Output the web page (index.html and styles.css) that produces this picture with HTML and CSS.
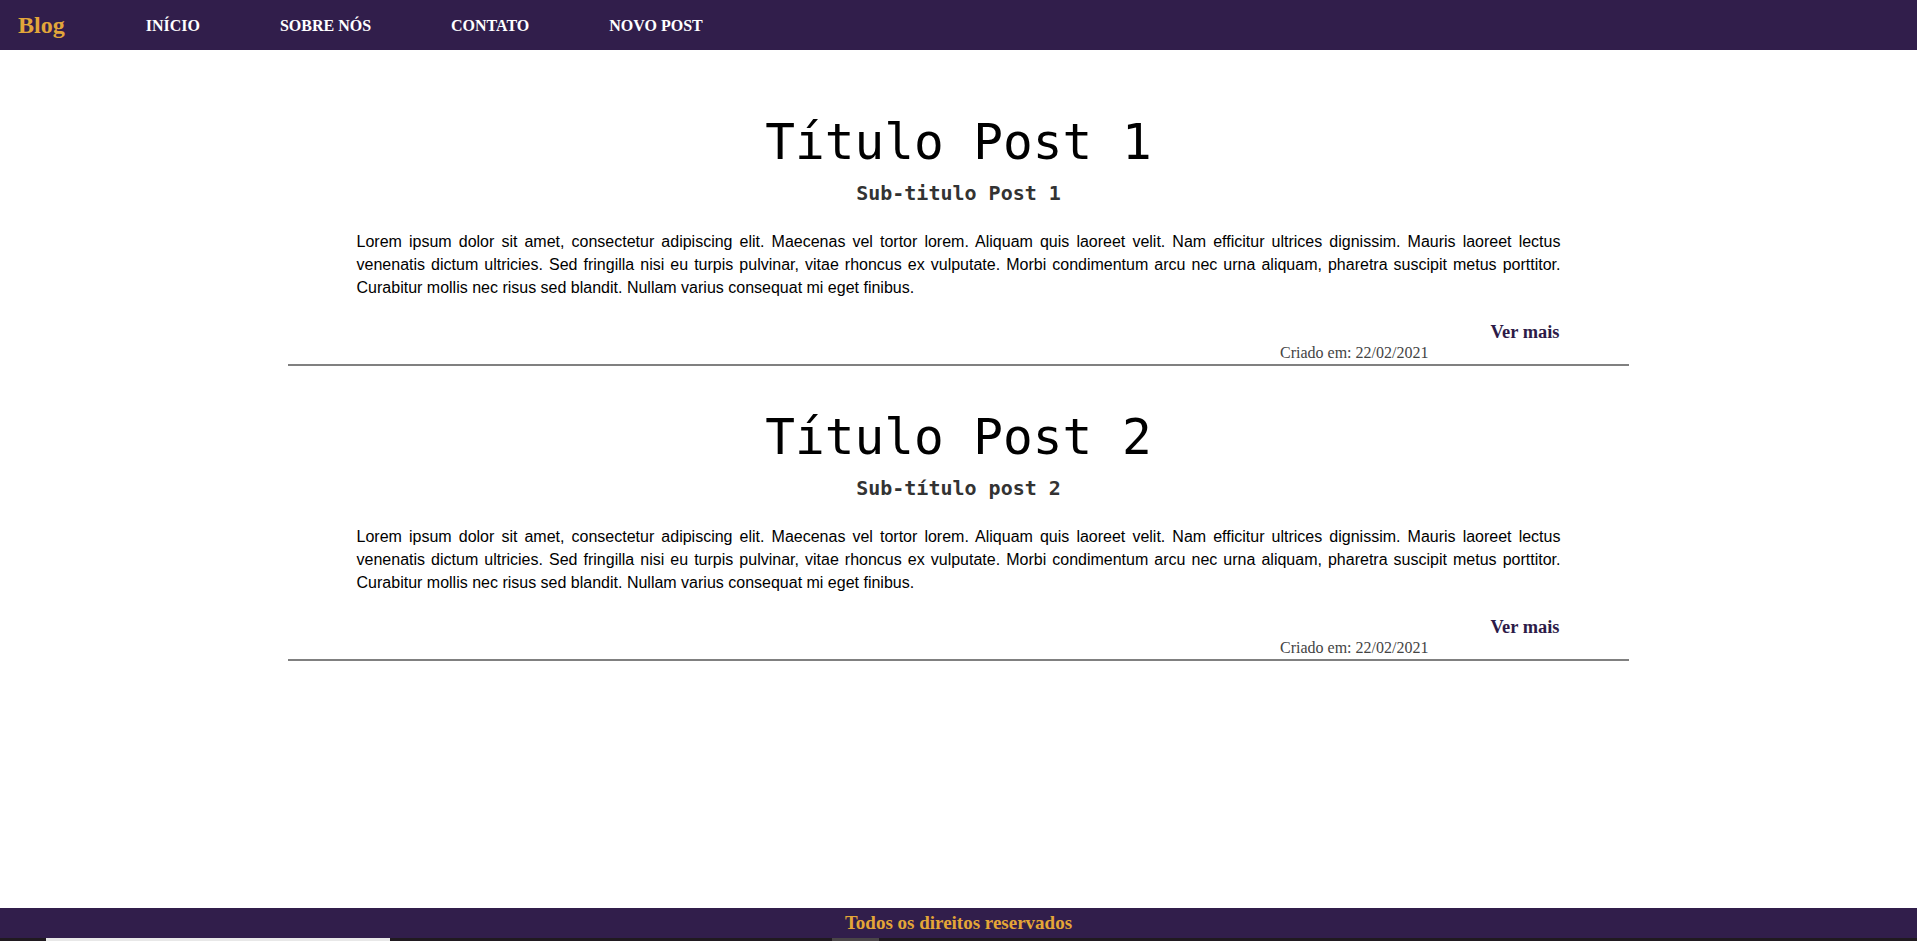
FILE: index.html
```html
<!DOCTYPE html>
<html lang="pt-BR">
<head>
<meta charset="utf-8">
<title>Blog</title>
<link rel="stylesheet" href="styles.css">
</head>
<body>
<header class="topbar">
  <a class="brand" href="#">Blog</a>
  <nav class="nav">
    <a class="nav-link" href="#">INÍCIO</a>
    <a class="nav-link" href="#">SOBRE NÓS</a>
    <a class="nav-link" href="#">CONTATO</a>
    <a class="nav-link" href="#">NOVO POST</a>
  </nav>
</header>

<main class="posts">
  <article class="post">
    <h1 class="post-title">Título Post 1</h1>
    <h2 class="post-subtitle">Sub-titulo Post 1</h2>
    <p class="post-text">Lorem ipsum dolor sit amet, consectetur adipiscing elit. Maecenas vel tortor lorem. Aliquam quis laoreet velit. Nam efficitur ultrices dignissim. Mauris laoreet lectus venenatis dictum ultricies. Sed fringilla nisi eu turpis pulvinar, vitae rhoncus ex vulputate. Morbi condimentum arcu nec urna aliquam, pharetra suscipit metus porttitor. Curabitur mollis nec risus sed blandit. Nullam varius consequat mi eget finibus.</p>
    <div class="post-meta">
      <a class="more" href="#">Ver mais</a>
      <span class="date">Criado em: 22/02/2021</span>
    </div>
    <hr class="divider">
  </article>

  <article class="post">
    <h1 class="post-title">Título Post 2</h1>
    <h2 class="post-subtitle">Sub-título post 2</h2>
    <p class="post-text">Lorem ipsum dolor sit amet, consectetur adipiscing elit. Maecenas vel tortor lorem. Aliquam quis laoreet velit. Nam efficitur ultrices dignissim. Mauris laoreet lectus venenatis dictum ultricies. Sed fringilla nisi eu turpis pulvinar, vitae rhoncus ex vulputate. Morbi condimentum arcu nec urna aliquam, pharetra suscipit metus porttitor. Curabitur mollis nec risus sed blandit. Nullam varius consequat mi eget finibus.</p>
    <div class="post-meta">
      <a class="more" href="#">Ver mais</a>
      <span class="date">Criado em: 22/02/2021</span>
    </div>
    <hr class="divider">
  </article>
</main>

<footer class="site-footer">Todos os direitos reservados</footer>
<div class="taskbar">
  <span class="tb-gap-a"></span>
  <span class="tb-light"></span>
  <span class="tb-gap-b"></span>
  <span class="tb-gray"></span>
</div>
</body>
</html>
```

FILE: styles.css
```css
* {
  box-sizing: border-box;
}

html, body {
  margin: 0;
  padding: 0;
}

body {
  min-height: 100vh;
  display: flex;
  flex-direction: column;
  background: #ffffff;
  font-family: "Liberation Serif", "Times New Roman", serif;
}

.topbar {
  height: 50px;
  background: #311e4b;
  display: flex;
  align-items: center;
  gap: 81px;
  padding-left: 18px;
}

.brand {
  color: #e2a63a;
  font-size: 24px;
  font-weight: bold;
  text-decoration: none;
}

.nav {
  display: flex;
  gap: 80px;
}

.nav-link {
  color: #ffffff;
  font-size: 16px;
  font-weight: bold;
  text-decoration: none;
  padding-top: 1px;
}

.posts {
  flex: 1;
  width: 70%;
  margin: 0 auto;
  padding-top: 21px;
}

.post {
  padding-top: 43px;
}

.post-title {
  margin: 0;
  text-align: center;
  font-family: "DejaVu Sans Mono", monospace;
  font-weight: normal;
  font-size: 49.4px;
  line-height: 57px;
  color: #000000;
}

.post-subtitle {
  margin: 11px 0 0;
  text-align: center;
  font-family: "DejaVu Sans Mono", monospace;
  font-weight: bold;
  font-size: 20px;
  line-height: 23px;
  color: #333333;
}

.post-text {
  margin: 25px 0 0;
  padding: 0 69px;
  text-align: justify;
  font-family: "Liberation Sans", Arial, sans-serif;
  font-size: 16px;
  line-height: 23px;
  color: #000000;
}

.post-meta {
  margin-top: 23px;
  padding: 0 70px 0 69px;
  display: flex;
  flex-direction: column;
  align-items: flex-end;
}

.more {
  color: #2d1b48;
  font-size: 18.4px;
  font-weight: bold;
  line-height: 21px;
  text-decoration: none;
}

.date {
  margin-top: 1px;
  margin-right: 131px;
  color: #444444;
  font-size: 16px;
  line-height: 18px;
}

.divider {
  margin: 2px 0 0;
  height: 0;
  border: none;
  border-top: 2px solid #808080;
}

.site-footer {
  height: 30px;
  background: #311e4b;
  color: #e4a637;
  text-align: center;
  font-size: 19px;
  font-weight: bold;
  line-height: 30px;
}

.taskbar {
  height: 3px;
  background: #201a20;
  display: flex;
}

.tb-gap-a {
  width: 46px;
}

.tb-light {
  width: 344px;
  background: #e8e8e8;
}

.tb-gap-b {
  width: 442px;
}

.tb-gray {
  width: 47px;
  background: #4a4548;
}
```
